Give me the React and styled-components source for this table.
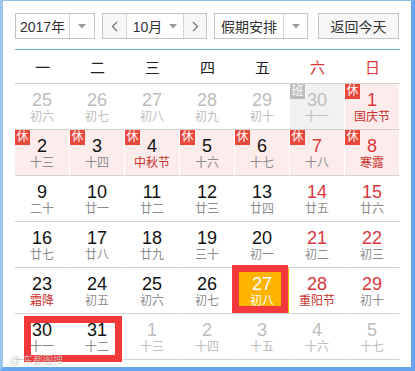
import React from "react";
import styled, { createGlobalStyle } from "styled-components";

const Global = createGlobalStyle`
  html, body { margin: 0; padding: 0; background: #fff; }
  body { font-family: "Liberation Sans", "Noto Sans CJK SC", sans-serif; }
`;

const Frame = styled.div`
  position: relative;
  box-sizing: border-box;
  width: 415px;
  height: 371px;
  background: #fff;
  border-top: 1px solid #8fc0ea;
  border-left: 3px solid #9cc6ec;
  border-right: 4px solid #67a6ee;
  border-bottom: 4px solid #67a6ee;
  padding: 12px 11px 0 12px;
  overflow: hidden;
`;

const Toolbar = styled.div`
  display: flex;
  align-items: center;
  height: 26px;
  padding-bottom: 10px;
  border-bottom: 1px solid #6ea9dc;
`;

const Box = styled.div`
  box-sizing: border-box;
  display: flex;
  height: 26px;
  width: ${(p) => p.$w}px;
  margin-right: ${(p) => p.$mr || 0}px;
  border: 1px solid #c4c4c4;
  background: ${(p) => (p.$gray ? "#f7f7f7" : "#fff")};
  color: #333;
  font-size: 14px;
  align-items: stretch;
`;

const Part = styled.div`
  box-sizing: border-box;
  display: flex;
  align-items: center;
  justify-content: center;
  flex: ${(p) => (p.$w ? `0 0 ${p.$w}px` : "1 1 auto")};
  border-left: ${(p) => (p.$sep ? "1px solid #d4d4d4" : "none")};
  background: ${(p) => (p.$shade ? "#f7f7f7" : "transparent")};
  gap: 7px;
  padding-right: ${(p) => p.$pr || 0}px;
`;

const Tri = () => (
  <svg width="8" height="5" viewBox="0 0 8 5">
    <polygon points="0,0 8,0 4,4.5" fill="#9a9a9a" />
  </svg>
);

const Chev = ({ dir }) => (
  <svg width="7" height="11" viewBox="0 0 7 11">
    <polyline
      points={dir === "l" ? "6,1 1.5,5.5 6,10" : "1,1 5.5,5.5 1,10"}
      fill="none"
      stroke="#777"
      strokeWidth="1.3"
    />
  </svg>
);

const Grid = styled.div`
  display: grid;
  grid-template-columns: repeat(7, 55px);
`;

const Head = styled.div`
  height: 33px;
  display: flex;
  align-items: center;
  justify-content: center;
  font-size: 15px;
  color: ${(p) => (p.$red ? "#d23a3a" : "#222")};
  border-bottom: 1px solid #d0d0d0;
`;

const Cell = styled.div`
  position: relative;
  box-sizing: border-box;
  height: 46px;
  border-bottom: 1px solid #d0d0d0;
  border-right: 1px solid #fff;
  background: ${(p) =>
    p.$sel ? "#ffb400" : p.$bg === "pink" ? "#fdecec" : p.$bg === "gray" ? "#f1f1f1" : "#fff"};
  display: flex;
  flex-direction: column;
  align-items: center;
  padding-top: 6px;
`;

const Num = styled.div`
  font-size: 18px;
  line-height: 20px;
  color: ${(p) => p.$c};
`;

const Lunar = styled.div`
  font-size: 12px;
  line-height: 14px;
  color: ${(p) => p.$c};
`;

const Badge = styled.div`
  position: absolute;
  left: 0;
  top: 0;
  width: 15px;
  height: 15px;
  font-size: 12px;
  line-height: 15px;
  text-align: center;
  color: #fff;
  background: ${(p) => (p.$work ? "#bdbdbd" : "#e8473c")};
`;

const Mark = styled.div`
  position: absolute;
  box-sizing: border-box;
  border: 7px solid #f2383a;
  pointer-events: none;
`;

const Water = styled.div`
  position: absolute;
  left: 7px;
  top: 351px;
  font-size: 10px;
  color: #c8c8c8;
  opacity: 0.8;
  letter-spacing: 0;
`;

const RED = "#d9373c";
const HRED = "#c9302c";
const BLACK = "#111";
const GRAY = "#8c8c8c";
const DIM = "#bdbdbd";

// kind: o = other month, n = normal, w = weekend
const days = [
  ["25", "初六", "o"], ["26", "初七", "o"], ["27", "初八", "o"], ["28", "初九", "o"], ["29", "初十", "o"],
  ["30", "十一", "o", { bg: "gray", badge: "班" }], ["1", "国庆节", "w", { bg: "pink", badge: "休", hol: true }],
  ["2", "十三", "n", { bg: "pink", badge: "休" }], ["3", "十四", "n", { bg: "pink", badge: "休" }],
  ["4", "中秋节", "n", { bg: "pink", badge: "休", hol: true }], ["5", "十六", "n", { bg: "pink", badge: "休" }],
  ["6", "十七", "n", { bg: "pink", badge: "休" }], ["7", "十八", "w", { bg: "pink", badge: "休" }],
  ["8", "寒露", "w", { bg: "pink", badge: "休", hol: true }],
  ["9", "二十", "n"], ["10", "廿一", "n"], ["11", "廿二", "n"], ["12", "廿三", "n"], ["13", "廿四", "n"], ["14", "廿五", "w"], ["15", "廿六", "w"],
  ["16", "廿七", "n"], ["17", "廿八", "n"], ["18", "廿九", "n"], ["19", "三十", "n"], ["20", "初一", "n"], ["21", "初二", "w"], ["22", "初三", "w"],
  ["23", "霜降", "n", { hol: true }], ["24", "初五", "n"], ["25", "初六", "n"], ["26", "初七", "n"],
  ["27", "初八", "n", { sel: true }], ["28", "重阳节", "w", { hol: true }], ["29", "初十", "w"],
  ["30", "十一", "n"], ["31", "十二", "n"], ["1", "十三", "o"], ["2", "十四", "o"], ["3", "十五", "o"], ["4", "十六", "o"], ["5", "十七", "o"],
];

const weekdays = ["一", "二", "三", "四", "五", "六", "日"];

export default function App() {
  return (
    <>
      <Global />
      <Frame>
        <Toolbar>
          <Box $w={80} $mr={7}>
            <Part>2017年</Part>
            <Part $w={25} $sep>
              <Tri />
            </Part>
          </Box>
          <Box $w={105} $mr={7}>
            <Part $w={23} $shade>
              <Chev dir="l" />
            </Part>
            <Part $sep>
              10月 <Tri />
            </Part>
            <Part $w={23} $sep $shade>
              <Chev dir="r" />
            </Part>
          </Box>
          <Box $w={94} $mr={10}>
            <Part>假期安排</Part>
            <Part $w={24} $sep>
              <Tri />
            </Part>
          </Box>
          <Box $w={81} $gray>
            <Part>返回今天</Part>
          </Box>
        </Toolbar>
        <Grid>
          {weekdays.map((w, i) => (
            <Head key={w} $red={i >= 5}>
              {w}
            </Head>
          ))}
          {days.map(([n, l, k, o = {}], i) => {
            const numC = o.sel ? "#fff" : k === "o" ? DIM : k === "w" ? RED : BLACK;
            const lunC = o.sel ? "#fff" : o.hol ? HRED : k === "o" ? DIM : GRAY;
            return (
              <Cell key={i} $bg={o.bg} $sel={o.sel}>
                {o.badge && <Badge $work={o.badge === "班"}>{o.badge}</Badge>}
                <Num $c={numC}>{n}</Num>
                <Lunar $c={lunC}>{l}</Lunar>
              </Cell>
            );
          })}
        </Grid>
        <Mark style={{ left: 229, top: 264, width: 56, height: 48 }} />
        <Mark style={{ left: 21, top: 315, width: 98, height: 46 }} />
        <Water>@ 东都图搜</Water>
      </Frame>
    </>
  );
}
